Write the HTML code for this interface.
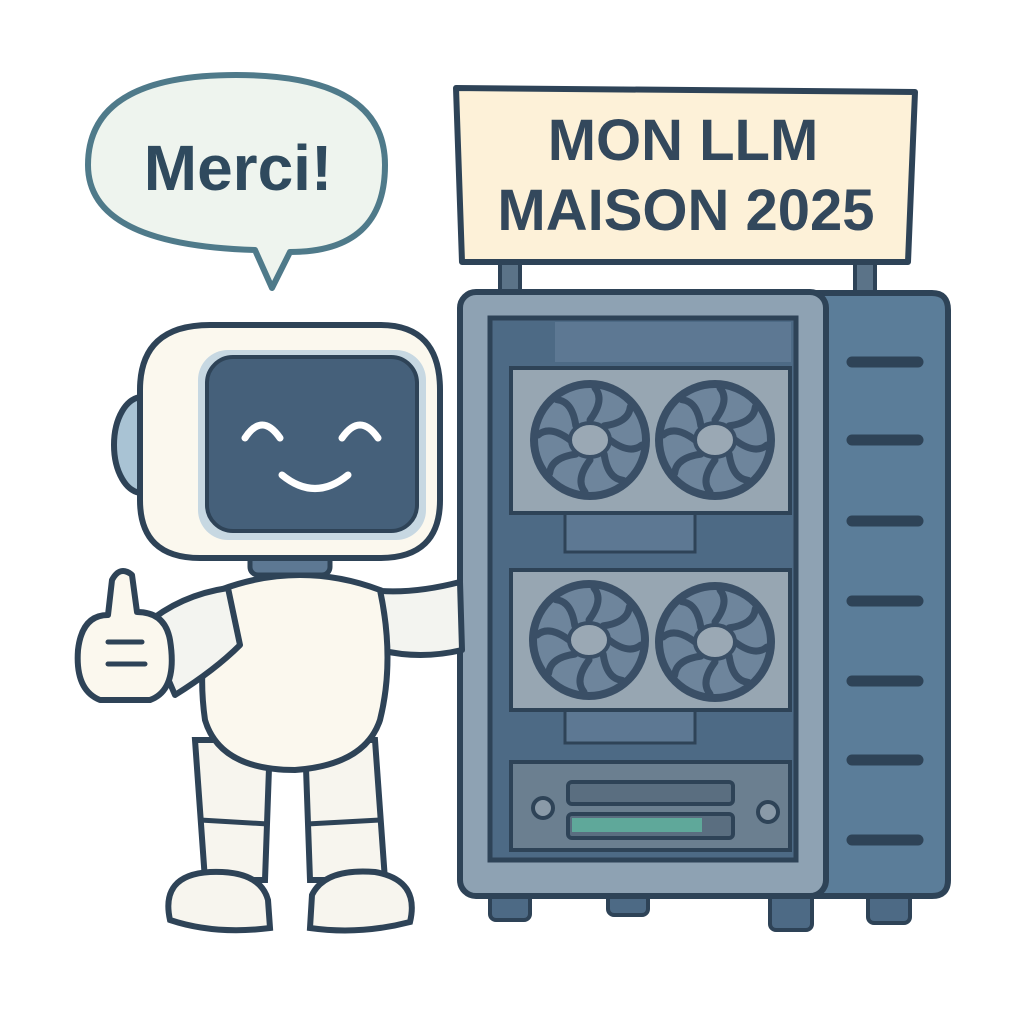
<!DOCTYPE html>
<html><head><style>html,body{margin:0;padding:0;background:#fff}svg{display:block}</style></head>
<body>
<svg width="1024" height="1024" viewBox="0 0 1024 1024" xmlns="http://www.w3.org/2000/svg">
<defs>
<g id="fan">
<circle r="60" fill="#3a4f66"/>
<circle r="52" fill="#6e859c"/>
<g stroke="#3a4f66" stroke-width="7" fill="none" stroke-linecap="round">
<path d="M0,-20 Q15,-40 5,-52"/><path d="M0,-20 Q15,-40 5,-52" transform="rotate(45)"/>
<path d="M0,-20 Q15,-40 5,-52" transform="rotate(90)"/><path d="M0,-20 Q15,-40 5,-52" transform="rotate(135)"/>
<path d="M0,-20 Q15,-40 5,-52" transform="rotate(180)"/><path d="M0,-20 Q15,-40 5,-52" transform="rotate(225)"/>
<path d="M0,-20 Q15,-40 5,-52" transform="rotate(270)"/><path d="M0,-20 Q15,-40 5,-52" transform="rotate(315)"/>
</g>
<ellipse rx="20" ry="17" fill="#9aa8b4" stroke="#3a4f66" stroke-width="4"/>
</g>
</defs>
<!-- speech bubble -->
<path d="M236,75 Q385,75 385,165 Q385,252 290,252 L272,288 L255,250 Q88,245 88,165 Q88,75 236,75 Z" fill="#eef4ee" stroke="#4f7a8a" stroke-width="6" stroke-linejoin="round"/>
<text x="238" y="190" font-family="Liberation Sans, sans-serif" font-weight="bold" font-size="64" fill="#2f4a5e" text-anchor="middle">Merci!</text>
<!-- sign posts -->
<rect x="500" y="255" width="20" height="45" fill="#5b7388" stroke="#2e4357" stroke-width="4"/>
<rect x="855" y="255" width="20" height="45" fill="#5b7388" stroke="#2e4357" stroke-width="4"/>
<!-- sign -->
<path d="M456,88 L915,92 L908,262 L462,262 Z" fill="#fdf1d8" stroke="#2e4357" stroke-width="6" stroke-linejoin="round"/>
<text x="683" y="160" font-family="Liberation Sans, sans-serif" font-weight="bold" font-size="58" fill="#33485c" text-anchor="middle">MON LLM</text>
<text x="686" y="230" font-family="Liberation Sans, sans-serif" font-weight="bold" font-size="58" fill="#33485c" text-anchor="middle">MAISON 2025</text>
<!-- feet -->
<g fill="#4d6a85" stroke="#2e4357" stroke-width="4">
<rect x="490" y="885" width="40" height="35" rx="6"/><rect x="608" y="885" width="40" height="30" rx="6"/>
<rect x="770" y="885" width="42" height="45" rx="6"/><rect x="868" y="885" width="42" height="38" rx="6"/>
</g>
<!-- side -->
<path d="M815,293 H932 Q948,293 948,310 V880 Q948,896 932,896 H815 Z" fill="#5b7d99" stroke="#2e4357" stroke-width="6"/>
<g stroke="#2e4357" stroke-width="11" stroke-linecap="round">
<line x1="852" y1="362" x2="918" y2="362"/><line x1="852" y1="440" x2="918" y2="440"/>
<line x1="852" y1="521" x2="918" y2="521"/><line x1="852" y1="601" x2="918" y2="601"/>
<line x1="852" y1="681" x2="918" y2="681"/><line x1="852" y1="760" x2="918" y2="760"/>
<line x1="852" y1="840" x2="918" y2="840"/>
</g>
<!-- front frame -->
<rect x="460" y="292" width="366" height="604" rx="16" fill="#8ea2b3" stroke="#2e4357" stroke-width="6"/>
<rect x="490" y="318" width="306" height="542" fill="#4d6a85" stroke="#2e4357" stroke-width="5"/>
<rect x="555" y="322" width="236" height="40" fill="#5d7893"/>
<rect x="565" y="472" width="130" height="80" fill="#5d7893" stroke="#2e4357" stroke-width="3"/>
<rect x="565" y="665" width="130" height="78" fill="#5d7893" stroke="#2e4357" stroke-width="3"/>
<rect x="511" y="368" width="279" height="145" fill="#97a6b2" stroke="#2e4357" stroke-width="4"/>
<rect x="511" y="570" width="279" height="140" fill="#97a6b2" stroke="#2e4357" stroke-width="4"/>
<use href="#fan" x="590" y="440"/><use href="#fan" x="715" y="440"/>
<use href="#fan" x="589" y="640"/><use href="#fan" x="715" y="642"/>
<rect x="511" y="762" width="279" height="88" fill="#6b7f90" stroke="#2e4357" stroke-width="4"/>
<rect x="568" y="782" width="165" height="22" rx="4" fill="#5a6e80" stroke="#2e4357" stroke-width="4"/>
<rect x="568" y="814" width="165" height="24" rx="4" fill="#5a6e80" stroke="#2e4357" stroke-width="4"/>
<rect x="572" y="818" width="130" height="14" fill="#5fa89a"/>
<circle cx="543" cy="808" r="10" fill="#8a9aa8" stroke="#2e4357" stroke-width="4"/>
<circle cx="768" cy="812" r="10" fill="#8a9aa8" stroke="#2e4357" stroke-width="4"/>
<!-- robot right arm -->
<path d="M370,590 Q410,595 460,582 L462,650 Q420,660 380,650 Z" fill="#f3f4f0" stroke="#2e4357" stroke-width="6" stroke-linejoin="round"/>
<!-- legs -->
<path d="M195,740 L270,740 L265,880 L205,880 Z" fill="#f7f5ee" stroke="#2e4357" stroke-width="6"/>
<path d="M305,740 L375,740 L385,880 L310,880 Z" fill="#f7f5ee" stroke="#2e4357" stroke-width="6"/>
<line x1="200" y1="820" x2="268" y2="824" stroke="#2e4357" stroke-width="5"/>
<line x1="307" y1="824" x2="380" y2="820" stroke="#2e4357" stroke-width="5"/>
<path d="M170,920 Q160,875 210,872 Q260,870 268,900 L270,928 Q215,935 170,920 Z" fill="#f7f5ee" stroke="#2e4357" stroke-width="6"/>
<path d="M310,928 L312,895 Q325,868 375,872 Q420,880 410,922 Q360,935 310,928 Z" fill="#f7f5ee" stroke="#2e4357" stroke-width="6"/>
<!-- torso -->
<path d="M220,590 Q300,560 380,590 Q395,660 380,720 Q365,765 295,770 Q220,770 205,720 Q195,650 220,590 Z" fill="#fbf8ee" stroke="#2e4357" stroke-width="6"/>
<!-- neck -->
<rect x="250" y="550" width="80" height="25" rx="8" fill="#5d7893" stroke="#2e4357" stroke-width="5"/>
<!-- left arm + thumb -->
<path d="M228,588 Q180,595 145,625 L175,695 Q215,670 240,645 Z" fill="#f3f4f0" stroke="#2e4357" stroke-width="6" stroke-linejoin="round"/>
<path d="M108,615 L112,580 Q120,565 132,575 L137,612 Q165,612 170,640 Q178,690 150,700 L100,700 Q75,690 78,650 Q82,615 108,615 Z" fill="#fbf8ee" stroke="#2e4357" stroke-width="6" stroke-linejoin="round"/>
<line x1="108" y1="642" x2="142" y2="642" stroke="#2e4357" stroke-width="5" stroke-linecap="round"/>
<line x1="108" y1="664" x2="145" y2="664" stroke="#2e4357" stroke-width="5" stroke-linecap="round"/>
<!-- head -->
<ellipse cx="142" cy="445" rx="28" ry="48" fill="#a9c3d4" stroke="#2e4357" stroke-width="6"/>
<path d="M210,325 H380 Q440,325 440,390 V500 Q440,558 380,558 H200 Q140,558 140,500 V390 Q140,325 210,325 Z" fill="#fbf8ee" stroke="#2e4357" stroke-width="6"/>
<rect x="198" y="350" width="228" height="190" rx="30" fill="#c7d8e2"/>
<rect x="207" y="357" width="210" height="174" rx="26" fill="#45607a" stroke="#2e4357" stroke-width="4"/>
<g stroke="#fff" stroke-width="7" fill="none" stroke-linecap="round">
<path d="M245,438 Q262,412 280,438"/><path d="M342,438 Q360,412 378,438"/>
<path d="M282,475 Q315,502 348,475"/>
</g>
</svg>
</body></html>
